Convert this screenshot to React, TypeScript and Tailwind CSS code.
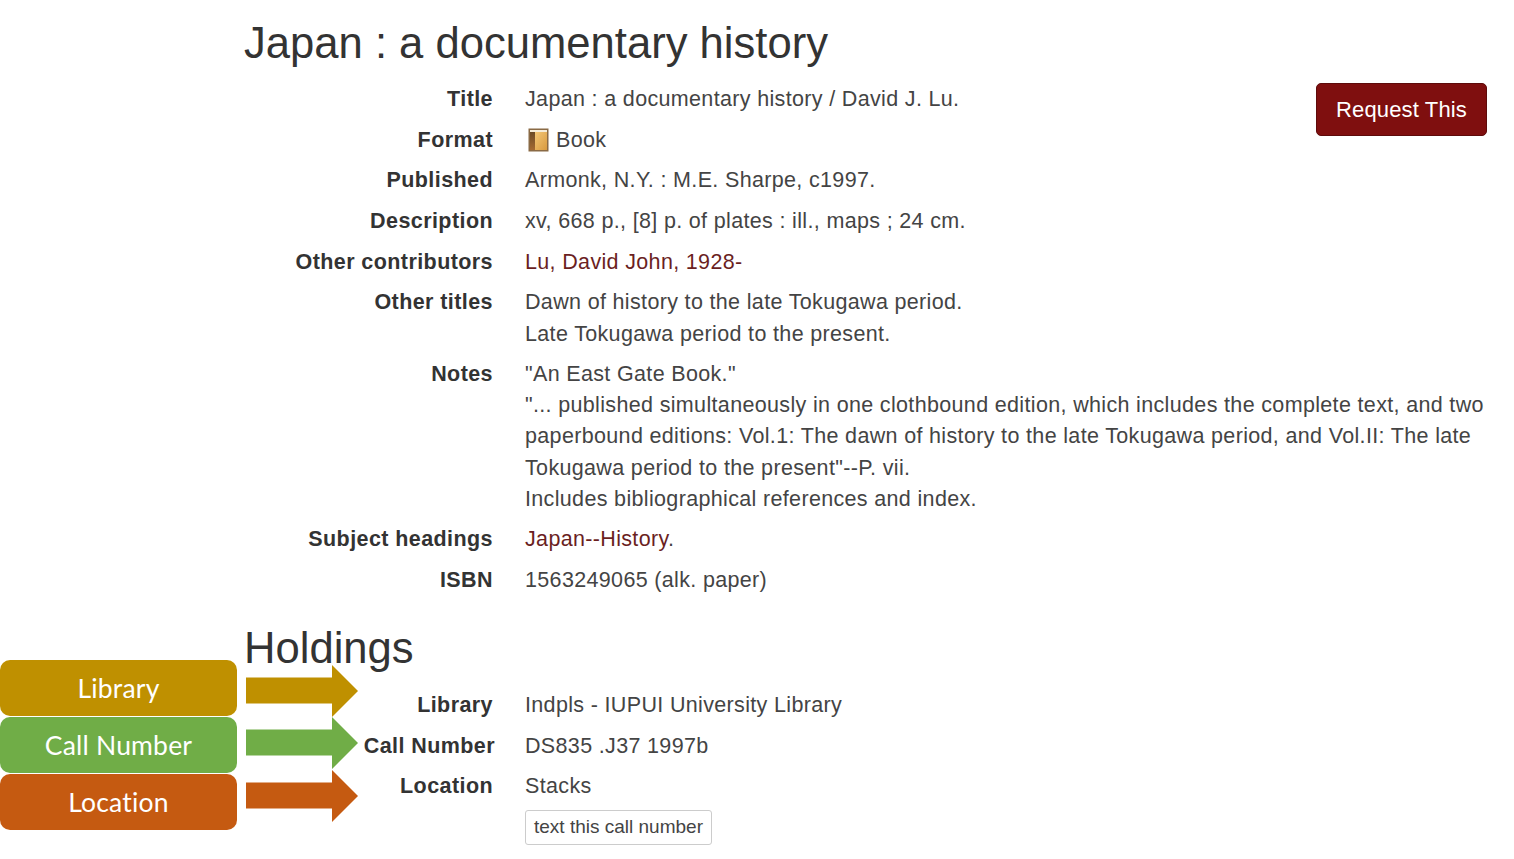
const sans = "font-['Liberation_Sans',Arial,sans-serif]";

function Row({ label, children, labelClass = "" }: { label: string; children: React.ReactNode; labelClass?: string }) {
  return (
    <>
      <dt className={`text-right font-bold tracking-[0.42px] text-[#333] ${labelClass}`}>{label}</dt>
      <dd className="tracking-[0.34px] text-[#444]">{children}</dd>
    </>
  );
}

function BookIcon() {
  return (
    <svg width="22" height="24" viewBox="0 0 22 24" className="mr-[6px] ml-[3px] inline-block h-[24px] align-[-5px]">
      <defs>
        <linearGradient id="page" x1="0" y1="0" x2="1" y2="1">
          <stop offset="0" stopColor="#f3c777" />
          <stop offset="1" stopColor="#d99a3f" />
        </linearGradient>
        <linearGradient id="spine" x1="0" y1="0" x2="0" y2="1">
          <stop offset="0" stopColor="#6b4a26" />
          <stop offset="1" stopColor="#a56a32" />
        </linearGradient>
      </defs>
      <rect x="0.5" y="0.5" width="20" height="23" fill="#8a6a45" />
      <rect x="2" y="2" width="17" height="2" fill="#f5ecd8" />
      <rect x="2" y="4" width="5" height="18" fill="url(#spine)" />
      <rect x="7" y="4" width="12" height="18" fill="url(#page)" />
    </svg>
  );
}

function Arrow({ color, className }: { color: string; className: string }) {
  return (
    <svg width="112" height="52" viewBox="0 0 112 52" className={className}>
      <path d="M0 12.5H86V0L112 26 86 52V38.5H0Z" fill={color} />
    </svg>
  );
}

function Callout({ text, color }: { text: string; color: string }) {
  return (
    <div className={`flex h-[56px] items-center justify-center rounded-[10px] pt-[2px] text-[26.5px] tracking-[0.2px] text-white ${color}`}>
      {text}
    </div>
  );
}

export default function App() {
  return (
    <div className={`relative h-[859px] w-[1514px] overflow-hidden bg-white pl-[244px] ${sans}`}>
      <h1 className="pt-[17px] text-[43.6px] leading-[52px] text-[#333]">Japan : a documentary history</h1>

      <button className="absolute top-[83px] left-[1316px] h-[53px] w-[171px] rounded-[5px] border border-[#5e0b0b] bg-[#7f0f0f] text-[22px] tracking-[0.15px] text-white">
        Request This
      </button>

      <dl className="mt-[15px] grid w-[1245px] grid-cols-[249px_1fr] gap-x-[32px] gap-y-[9.6px] text-[21.5px] leading-[31.1px]">
        <Row label="Title">Japan : a documentary history / David J. Lu.</Row>
        <Row label="Format">
          <BookIcon />
          Book
        </Row>
        <Row label="Published">Armonk, N.Y. : M.E. Sharpe, c1997.</Row>
        <Row label="Description">xv, 668 p., [8] p. of plates : ill., maps ; 24 cm.</Row>
        <Row label="Other contributors">
          <a className="text-[#6b1f1f]">Lu, David John, 1928-</a>
        </Row>
        <Row label="Other titles">
          Dawn of history to the late Tokugawa period.
          <br />
          Late Tokugawa period to the present.
        </Row>
        <Row label="Notes">
          "An East Gate Book."
          <br />
          "... published simultaneously in one clothbound edition, which includes the complete text, and two paperbound
          editions: Vol.1: The dawn of history to the late Tokugawa period, and Vol.II: The late Tokugawa period to the
          present"--P. vii.
          <br />
          Includes bibliographical references and index.
        </Row>
        <Row label="Subject headings">
          <a className="text-[#6b1f1f]">Japan--History</a>.
        </Row>
        <Row label="ISBN">1563249065 (alk. paper)</Row>
      </dl>

      <h2 className="mt-[26px] text-[43.6px] leading-[52px] text-[#333]">Holdings</h2>

      <dl className="mt-[16px] grid w-[1245px] grid-cols-[249px_1fr] gap-x-[32px] gap-y-[9.6px] text-[21.5px] leading-[31.1px]">
        <Row label="Library">Indpls - IUPUI University Library</Row>
        <Row label="Call Number" labelClass="-mr-[2px]">DS835 .J37 1997b</Row>
        <Row label="Location">
          Stacks
          <div className="mt-[7px]">
            <button className="h-[35px] w-[187px] rounded-[3px] border border-[#ccc] text-[19px] tracking-normal text-[#444]">
              text this call number
            </button>
          </div>
        </Row>
      </dl>

      {/* annotation overlay pasted on top of the screenshot */}
      <div className="absolute top-[660px] left-0 flex w-[237px] flex-col gap-px font-['Lato',sans-serif]">
        <Callout text="Library" color="bg-[#bf9000]" />
        <Callout text="Call Number" color="bg-[#70ad47]" />
        <Callout text="Location" color="bg-[#c55a11]" />
      </div>
      <Arrow color="#bf9000" className="absolute top-[665px] left-[246px]" />
      <Arrow color="#70ad47" className="absolute top-[717px] left-[246px]" />
      <Arrow color="#c55a11" className="absolute top-[770px] left-[246px]" />
    </div>
  );
}
